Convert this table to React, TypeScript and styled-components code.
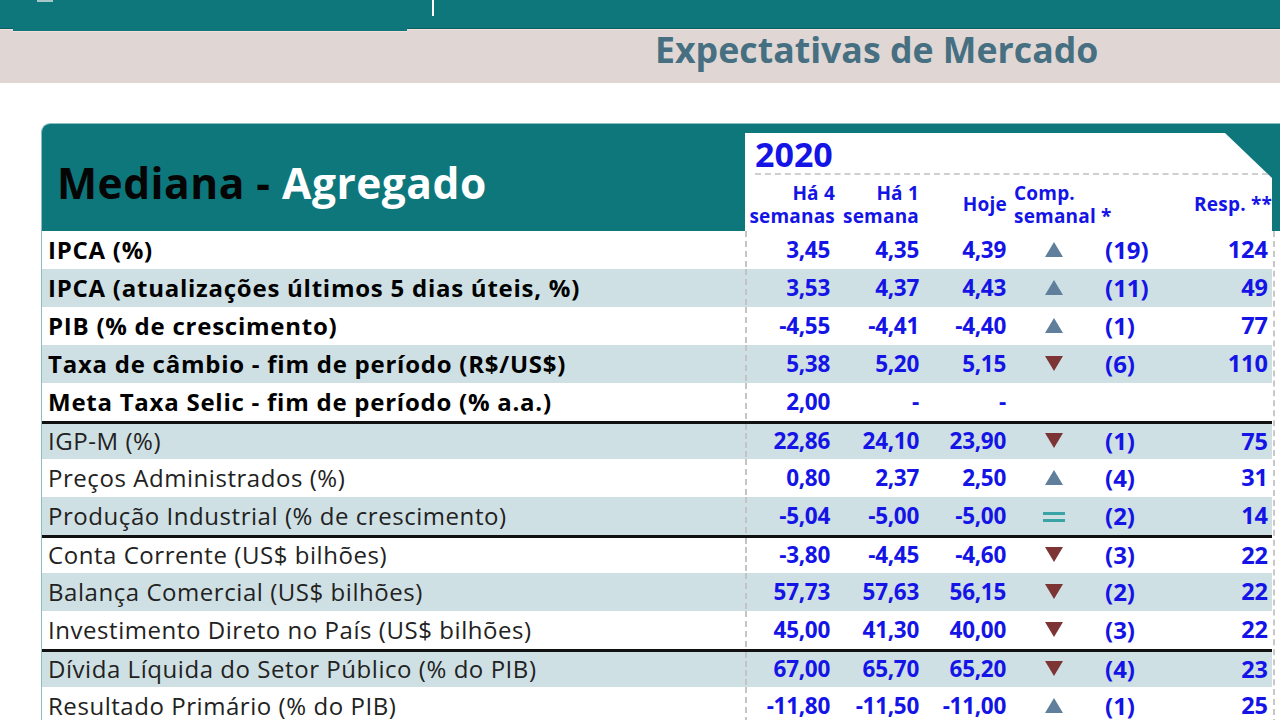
import React from 'react';
import styled, { createGlobalStyle } from 'styled-components';

const TEAL = '#0e777c';
const BLUE = '#1414e6';
const SHADE = '#cfe0e4';

const GlobalStyle = createGlobalStyle`
  html, body { margin: 0; padding: 0; background: #fff; overflow: hidden; }
  body { font-family: 'Open Sans', 'Noto Sans', sans-serif; }
  * { box-sizing: border-box; }
`;

const Page = styled.div`
  width: 1280px;
  height: 720px;
  overflow: hidden;
`;

const TopBar = styled.div`
  height: 29px;
  background: ${TEAL};
  border-bottom: 1px solid #0a5f63;
  display: flex;
  align-items: flex-start;
`;

const Tab = styled.div`
  position: relative;
  z-index: 1;
  margin-left: 13px;
  width: 394px;
  height: 32px;
  background: ${TEAL};
  border-bottom: 1px solid #f3dfd9;
  display: flex;
`;

const TabMark = styled.div`
  margin-left: 24px;
  width: 16px;
  height: 2px;
  background: #a7c8ca;
`;

const BarDivider = styled.div`
  margin-left: 25px;
  width: 2px;
  height: 16px;
  background: #fff;
`;

const Banner = styled.div`
  height: 54px;
  background: #e0d7d4;
  border-top: 1px solid #f3e1dc;
  padding-left: 655px;
  padding-top: 2px;
`;

const BannerTitle = styled.h1`
  margin: 0;
  font-size: 35.7px;
  line-height: 35px;
  font-weight: 700;
  color: #466f82;
  white-space: nowrap;
`;

const Card = styled.div`
  margin: 40px 0 0 41px;
  width: 1244px;
  border-top: 1px solid #8dbdc1;
  border-left: 1px solid #8dbdc1;
  border-top-left-radius: 9px;
  overflow: hidden;
`;

const CardHeader = styled.div`
  height: 107px;
  background: ${TEAL};
  display: flex;
`;

const HeadTitle = styled.div`
  flex: 1;
  padding: 37px 0 0 15px;
  font-size: 42.5px;
  line-height: 44px;
  font-weight: 700;
  letter-spacing: 0.5px;
  white-space: nowrap;
`;

const Dark = styled.span`
  color: #050505;
`;

const Light = styled.span`
  color: #ffffff;
`;

const Panel = styled.div`
  width: 527px;
  margin: 9px 13px 0 0;
  background: #fff;
  clip-path: polygon(0 0, calc(100% - 47px) 0, 100% 45px, 100% 100%, 0 100%);
  display: flex;
  flex-direction: column;
`;

const Year = styled.div`
  height: 42px;
  margin: 0 4px 0 10px;
  padding-top: 2px;
  font-size: 34px;
  line-height: 38px;
  font-weight: 700;
  color: ${BLUE};
  border-bottom: 2px dashed #cfcfcf;
`;

const COLS = '90px 89px 87px 86px 90px 85px';

const HeadGrid = styled.div`
  flex: 1;
  display: grid;
  grid-template-columns: ${COLS};
  align-items: center;
  padding-top: 3px;
`;

const HeadCell = styled.div<{ $align?: 'left' | 'right'; $pr?: number; $pl?: number; $span?: number }>`
  font-size: 19px;
  line-height: 23px;
  font-weight: 700;
  letter-spacing: 0.2px;
  color: ${BLUE};
  white-space: nowrap;
  text-align: ${(p) => p.$align || 'right'};
  padding-right: ${(p) => p.$pr ?? 0}px;
  padding-left: ${(p) => p.$pl ?? 0}px;
  grid-column: span ${(p) => p.$span ?? 1};
`;

const Body = styled.div`
  width: 1233px;
  border-right: 2px dashed #c8c8c8;
  display: flex;
  flex-direction: column;
`;

const Row = styled.div<{ $shade: boolean; $sep: boolean }>`
  width: 1230px;
  height: 38px;
  padding-bottom: ${(p) => (p.$sep ? 4 : 2)}px;
  display: grid;
  grid-template-columns: 703px ${COLS};
  align-items: center;
  background: ${(p) => (p.$shade ? SHADE : '#fff')};
  border-top: ${(p) => (p.$sep ? '3px solid #111' : 'none')};
`;

const Label = styled.div<{ $bold: boolean }>`
  padding-left: 6px;
  font-size: 24px;
  letter-spacing: ${(p) => (p.$bold ? '0.75px' : '0.55px')};
  font-weight: ${(p) => (p.$bold ? 700 : 400)};
  color: ${(p) => (p.$bold ? '#000' : '#222')};
  white-space: nowrap;
`;

const Num = styled.div<{ $first?: boolean }>`
  align-self: stretch;
  display: flex;
  align-items: center;
  justify-content: flex-end;
  padding-right: 5px;
  font-size: 22.5px;
  font-weight: 700;
  letter-spacing: -0.3px;
  color: ${BLUE};
  border-left: ${(p) => (p.$first ? '2px dashed #c4c4c4' : 'none')};
`;

const TrendCell = styled.div`
  display: flex;
  justify-content: center;
  align-items: center;
`;

const Comp = styled.div`
  padding-left: 8px;
  font-size: 24px;
  font-weight: 700;
  color: ${BLUE};
`;

const Resp = styled.div`
  padding-right: 4px;
  text-align: right;
  font-size: 23.5px;
  font-weight: 700;
  color: ${BLUE};
`;

type Trend = 'up' | 'down' | 'eq' | 'none';

const TrendIcon = ({ t }: { t: Trend }) => {
  if (t === 'up')
    return (
      <svg width="18" height="15" viewBox="0 0 18 15">
        <polygon points="9,0 18,15 0,15" fill="#5f7f9c" />
      </svg>
    );
  if (t === 'down')
    return (
      <svg width="18" height="15" viewBox="0 0 18 15">
        <polygon points="0,0 18,0 9,15" fill="#7d3434" />
      </svg>
    );
  if (t === 'eq')
    return (
      <svg width="22" height="14" viewBox="0 0 22 14" style={{ marginTop: 4 }}>
        <rect x="0" y="2" width="22" height="3" fill="#3aa3a6" />
        <rect x="0" y="9" width="22" height="3" fill="#3aa3a6" />
      </svg>
    );
  return null;
};

type RowData = {
  label: string;
  bold?: boolean;
  sep?: boolean;
  v: [string, string, string];
  t: Trend;
  c: string;
  r: string;
};

const rows: RowData[] = [
  { label: 'IPCA (%)', bold: true, v: ['3,45', '4,35', '4,39'], t: 'up', c: '(19)', r: '124' },
  { label: 'IPCA (atualizações últimos 5 dias úteis, %)', bold: true, v: ['3,53', '4,37', '4,43'], t: 'up', c: '(11)', r: '49' },
  { label: 'PIB (% de crescimento)', bold: true, v: ['-4,55', '-4,41', '-4,40'], t: 'up', c: '(1)', r: '77' },
  { label: 'Taxa de câmbio - fim de período (R$/US$)', bold: true, v: ['5,38', '5,20', '5,15'], t: 'down', c: '(6)', r: '110' },
  { label: 'Meta Taxa Selic - fim de período (% a.a.)', bold: true, v: ['2,00', '-', '-'], t: 'none', c: '', r: '' },
  { label: 'IGP-M (%)', sep: true, v: ['22,86', '24,10', '23,90'], t: 'down', c: '(1)', r: '75' },
  { label: 'Preços Administrados (%)', v: ['0,80', '2,37', '2,50'], t: 'up', c: '(4)', r: '31' },
  { label: 'Produção Industrial (% de crescimento)', v: ['-5,04', '-5,00', '-5,00'], t: 'eq', c: '(2)', r: '14' },
  { label: 'Conta Corrente (US$ bilhões)', sep: true, v: ['-3,80', '-4,45', '-4,60'], t: 'down', c: '(3)', r: '22' },
  { label: 'Balança Comercial (US$ bilhões)', v: ['57,73', '57,63', '56,15'], t: 'down', c: '(2)', r: '22' },
  { label: 'Investimento Direto no País (US$ bilhões)', v: ['45,00', '41,30', '40,00'], t: 'down', c: '(3)', r: '22' },
  { label: 'Dívida Líquida do Setor Público (% do PIB)', sep: true, v: ['67,00', '65,70', '65,20'], t: 'down', c: '(4)', r: '23' },
  { label: 'Resultado Primário (% do PIB)', v: ['-11,80', '-11,50', '-11,00'], t: 'up', c: '(1)', r: '25' },
];

export default function App() {
  return (
    <Page>
      <GlobalStyle />
      <TopBar>
        <Tab>
          <TabMark />
        </Tab>
        <BarDivider />
      </TopBar>
      <Banner>
        <BannerTitle>Expectativas de Mercado</BannerTitle>
      </Banner>
      <Card>
        <CardHeader>
          <HeadTitle>
            <Dark>Mediana - </Dark>
            <Light>Agregado</Light>
          </HeadTitle>
          <Panel>
            <Year>2020</Year>
            <HeadGrid>
              <HeadCell $pr={0}>
                Há 4<br />semanas
              </HeadCell>
              <HeadCell $pr={5}>
                Há 1<br />semana
              </HeadCell>
              <HeadCell $pr={4}>Hoje</HeadCell>
              <HeadCell $align="left" $pl={3} $span={2}>
                Comp.<br />semanal *
              </HeadCell>
              <HeadCell $pr={0}>Resp. **</HeadCell>
            </HeadGrid>
          </Panel>
        </CardHeader>
        <Body>
          {rows.map((r, i) => (
            <Row key={r.label} $shade={i % 2 === 1} $sep={!!r.sep}>
              <Label $bold={!!r.bold}>{r.label}</Label>
              <Num $first>{r.v[0]}</Num>
              <Num>{r.v[1]}</Num>
              <Num>{r.v[2]}</Num>
              <TrendCell>
                <TrendIcon t={r.t} />
              </TrendCell>
              <Comp>{r.c}</Comp>
              <Resp>{r.r}</Resp>
            </Row>
          ))}
        </Body>
      </Card>
    </Page>
  );
}
